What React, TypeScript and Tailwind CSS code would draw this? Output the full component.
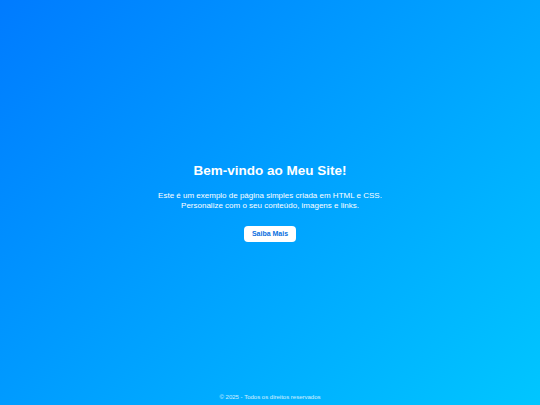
export default function App() {
  return (
    <div
      className="flex min-h-screen h-[405px] w-full flex-col bg-[linear-gradient(135deg,#007bff,#00c6ff)] text-white"
      style={{ fontFamily: '"Liberation Sans", Arial, sans-serif' }}
    >
      <main className="flex flex-1 flex-col items-center justify-center pt-[12px] text-center">
        <h1 className="text-[13.5px] font-bold leading-[16px]">Bem-vindo ao Meu Site!</h1>
        <p className="mt-[11.5px] text-[8px] leading-[10px]">
          Este é um exemplo de página simples criada em HTML e CSS.
          <br />
          Personalize com o seu conteúdo, imagens e links.
        </p>
        <a
          href="#"
          className="mt-[15.5px] inline-block rounded-[4px] bg-white px-[8px] py-[4px] text-[7px] font-bold leading-[8px] text-[#0a6fe0]"
        >
          Saiba Mais
        </a>
      </main>
      <footer className="pb-[4px] text-center text-[6px] leading-[8px] text-white/80">
        © 2025 - Todos os direitos reservados
      </footer>
    </div>
  )
}
